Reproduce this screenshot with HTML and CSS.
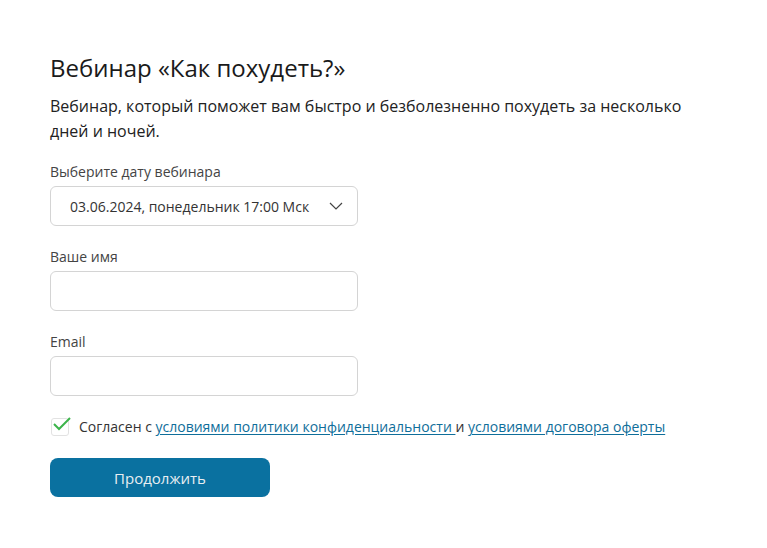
FILE: index.html
```html
<!DOCTYPE html>
<html lang="ru">
<head>
<meta charset="utf-8">
<link rel="stylesheet" href="styles.css">
</head>
<body>
<main class="page">
  <h1 class="title">Вебинар «Как похудеть?»</h1>
  <p class="lead">Вебинар, который поможет вам быстро и безболезненно похудеть за несколько дней и ночей.</p>
  <form class="form">
    <div class="field">
      <label class="label">Выберите дату вебинара</label>
      <div class="select">
        <span class="select-text">03.06.2024, понедельник 17:00 Мск</span>
        <svg class="chevron" width="14" height="8" viewBox="0 0 14 8"><path d="M1 1 L7 7 L13 1" fill="none" stroke="#444" stroke-width="1.2"/></svg>
      </div>
    </div>
    <div class="field">
      <label class="label">Ваше имя</label>
      <div class="input"></div>
    </div>
    <div class="field">
      <label class="label">Email</label>
      <div class="input"></div>
    </div>
    <div class="agree">
      <span class="checkbox">
        <svg width="20" height="16" viewBox="0 0 20 16"><path d="M2 8 L7 13 L18 2" fill="none" stroke="#3cb44b" stroke-width="2"/></svg>
      </span>
      <span class="agree-text">Согласен с <a href="#" class="link">условиями политики конфиденциальности </a>и <a href="#" class="link">условиями договора оферты</a></span>
    </div>
    <button type="button" class="btn">Продолжить</button>
  </form>
</main>
</body>
</html>
```
FILE: styles.css
```css
html, body {
  margin: 0;
  padding: 0;
  background: #fff;
}
body {
  font-family: "Open Sans", "Noto Sans", sans-serif;
  color: #222;
}
.page {
  padding: 51px 50px 0 50px;
  width: 640px;
}
.title {
  margin: 0;
  font-size: 24px;
  font-weight: 400;
  line-height: 34px;
  color: #1a1a1a;
}
.lead {
  margin: 9px 0 0 0;
  font-size: 16px;
  line-height: 25px;
  color: #222;
}
.form {
  margin-top: 18px;
  display: flex;
  flex-direction: column;
}
.field {
  display: flex;
  flex-direction: column;
  margin-bottom: 21px;
}
.label {
  font-size: 14px;
  line-height: 20px;
  color: #444;
  margin-bottom: 4px;
}
.select, .input {
  box-sizing: border-box;
  width: 308px;
  height: 40px;
  border: 1px solid #d4d4d4;
  border-radius: 6px;
  background: #fff;
}
.select {
  display: flex;
  align-items: center;
  justify-content: space-between;
  padding: 0 14px 0 19px;
}
.select-text {
  font-size: 14px;
  color: #333;
}
.chevron {
  display: block;
}
.agree {
  display: flex;
  align-items: center;
  gap: 10px;
  margin-top: 0;
  font-size: 14px;
  color: #333;
}
.checkbox {
  position: relative;
  width: 16px;
  height: 16px;
  border: 1px solid #e2e2e2;
  border-radius: 3px;
  margin-left: 1px;
  flex: none;
}
.checkbox svg {
  position: absolute;
  left: 0;
  top: -3px;
}
.link {
  color: #0f6e9a;
  text-decoration: underline;
  text-underline-offset: 2px;
}
.btn {
  margin-top: 22px;
  width: 220px;
  height: 39px;
  border: none;
  border-radius: 8px;
  background: #0a71a0;
  color: #e8eef2;
  font-family: "Open Sans", "Noto Sans", sans-serif;
  font-size: 15px;
  cursor: pointer;
}
```
